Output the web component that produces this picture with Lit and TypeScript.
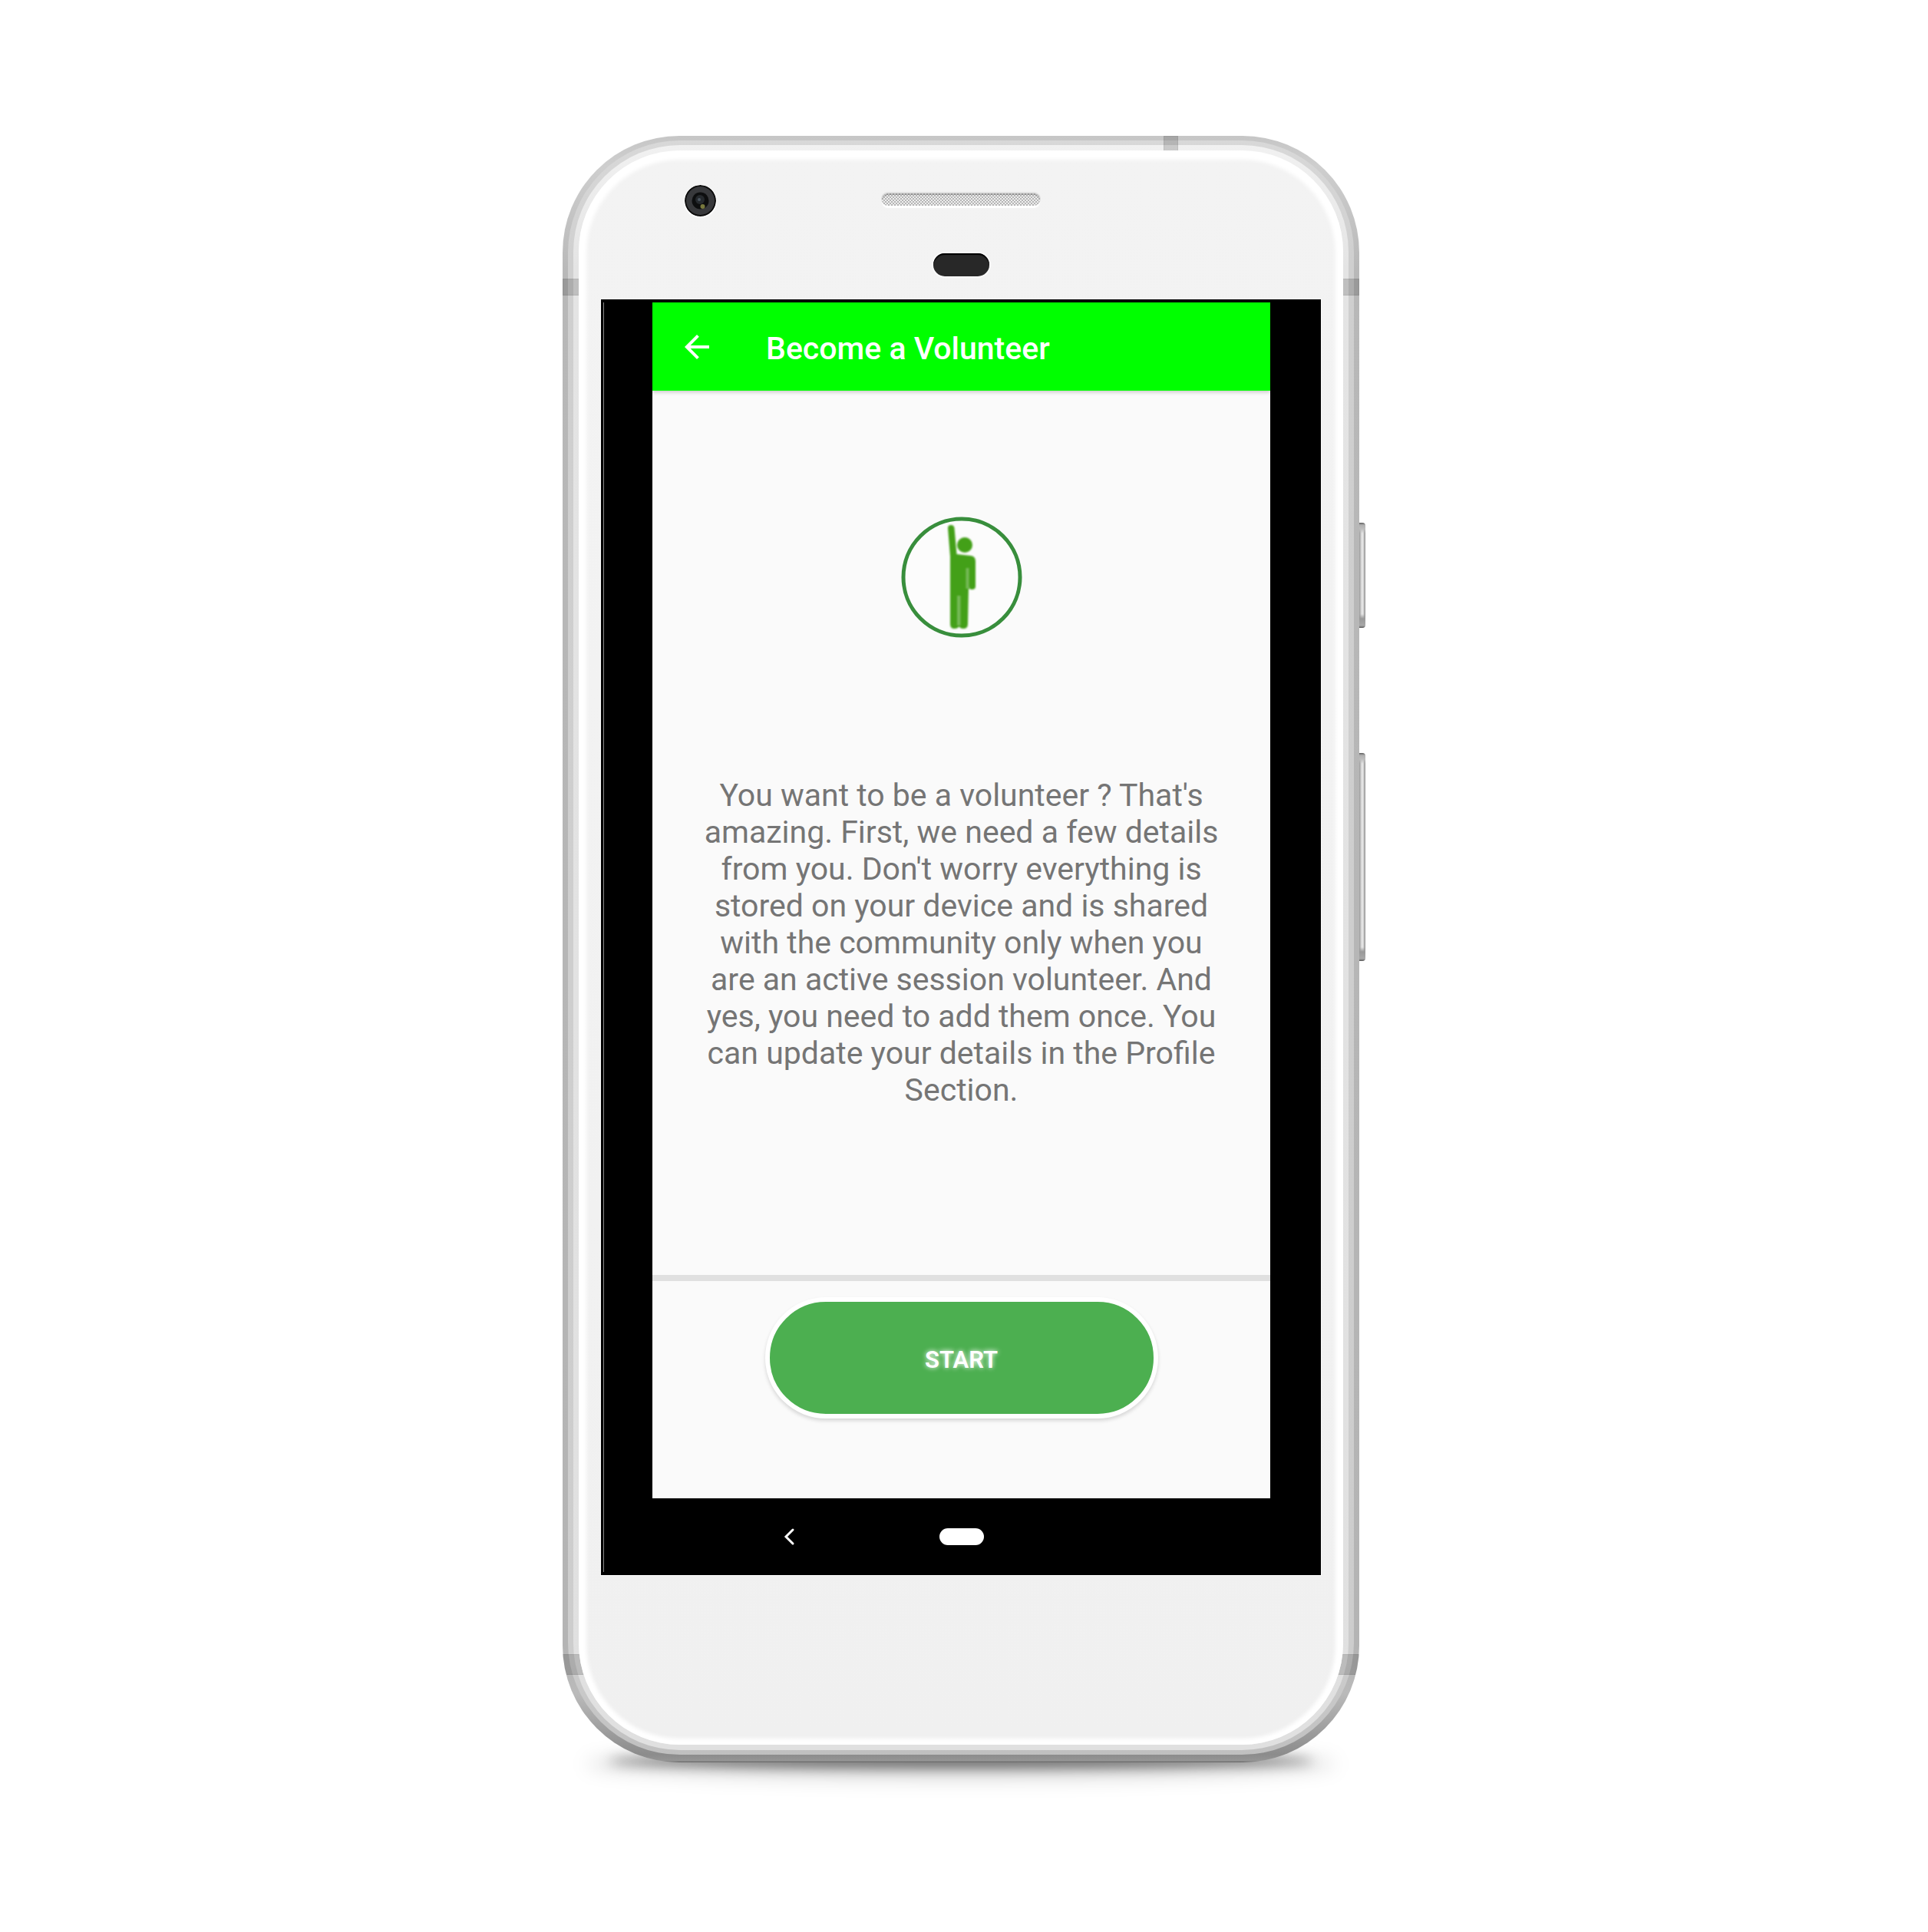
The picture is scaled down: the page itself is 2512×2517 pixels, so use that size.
import { LitElement, html, css, svg } from "lit";
import { customElement, property } from "lit/decorators.js";

const arrowIcon = svg`<path d="M20 11H7.83l5.59-5.59L12 4l-8 8 8 8 1.41-1.41L7.83 13H20v-2z" fill="currentColor" />`;

/* Round badge with a person raising one arm. */
@customElement("volunteer-badge")
export class VolunteerBadge extends LitElement {
  static styles = css`
    :host {
      display: block;
    }
    .badge {
      display: block;
      width: 158px;
      height: 158px;
    }
    .ring {
      fill: #fcfcfc;
      stroke: #388e3c;
      stroke-width: 5;
    }
    .figure {
      fill: #43a018;
      filter: blur(1px);
    }
    .seam {
      fill: #76b957;
      filter: blur(1px);
    }
  `;

  render() {
    return html`
      <svg class="badge" viewBox="0 0 158 158" role="img" aria-label="Volunteer">
        <circle class="ring" cx="79" cy="79" r="76" />
        <g class="figure">
          <circle cx="83" cy="37" r="10" />
          <path
            d="M61 15 Q61 11 65 11 Q69 11 69.500 15 L72.500 49 L91 51 Q97 52 97 58 L97 91 Q97 95 92.500 95 Q88 95 88 91 L87 140 Q87 146 81 146 Q77 146 75.500 143 Q74 146 69.500 146 Q64 146 64 140 L64 52 Z"
          />
        </g>
        <g class="seam">
          <rect x="84.500" y="67" width="4" height="27" />
          <rect x="73" y="103" width="4.500" height="39" />
        </g>
      </svg>
    `;
  }
}

/* Handset shell; the slotted content is the display. */
@customElement("phone-frame")
export class PhoneFrame extends LitElement {
  static styles = css`
    :host {
      display: block;
      width: 100%;
      max-width: 1046px;
    }
    .device {
      display: flex;
      align-items: stretch;
      position: relative;
    }
    .ground {
      position: absolute;
      left: 60px;
      right: 68px;
      bottom: -8px;
      height: 20px;
      border-radius: 50%;
      background: rgba(0, 0, 0, 0.5);
      filter: blur(8px);
    }
    .ground-wide {
      left: 30px;
      right: 38px;
      bottom: -22px;
      height: 40px;
      background: rgba(0, 0, 0, 0.14);
      filter: blur(12px);
    }
    .shell {
      position: relative;
      flex: 1;
      min-width: 0;
      overflow: hidden;
      border-radius: 152px;
      padding: 6px 7px 10px;
      background: linear-gradient(
        180deg,
        #c6c6c6 0,
        #cecece 40px,
        #b8b8b8 180px,
        #b4b4b4 calc(100% - 150px),
        #bababa calc(100% - 90px),
        #8c8c8c calc(100% - 10px),
        #959595 calc(100% - 2px),
        #606060 100%
      );
    }
    .ring-mid {
      border-radius: 146px;
      padding: 6px 7px;
      background: linear-gradient(180deg, #d8d8d8 0, #cfcfcf 160px, #cdcdcd calc(100% - 120px), #c0c0c0 100%);
    }
    .ring-in {
      border-radius: 139px;
      padding: 7px;
      background: linear-gradient(180deg, #f1f1f1 0, #e4e4e4 160px, #e0e0e0 100%);
    }
    .face {
      position: relative;
      z-index: 1;
      border-radius: 132px;
      padding-bottom: 221px;
      background: linear-gradient(180deg, #f3f3f3, #f0f0f0);
      box-shadow: inset 0 2px 5px 10px #ffffff;
    }
    .antenna {
      position: absolute;
      background: rgba(0, 0, 0, 0.16);
      box-shadow: inset 0 0 1px 1px rgba(0, 0, 0, 0.06);
    }
    .antenna-upper {
      left: 0;
      right: 0;
      top: 186px;
      height: 22px;
    }
    .antenna-lower {
      left: 0;
      right: 0;
      bottom: 114px;
      height: 27px;
    }
    .antenna-top {
      top: 0;
      right: 236px;
      width: 19px;
      height: 24px;
    }
    .bezel {
      display: grid;
      justify-items: center;
      row-gap: 48px;
      padding: 45px 138px 30px;
    }
    .sensors {
      display: grid;
      grid-template-columns: 1fr auto 1fr;
      align-items: center;
      justify-self: stretch;
    }
    .camera {
      display: block;
      width: 41px;
      height: 41px;
      border-radius: 50%;
      box-shadow: 0 1px 1px 1px #ffffff;
    }
    .speaker {
      width: 206px;
      height: 16px;
      margin-bottom: 4px;
      border-radius: 8px;
      background: repeating-conic-gradient(#b4b4b4 0 25%, #eeeeee 0 50%) 0 0 / 4px 4px;
      box-shadow: inset 0 2px 1px rgba(0, 0, 0, 0.22), 0 -1px 0 1px #e0e0e0, 0 3px 1px #ffffff;
    }
    .proximity {
      width: 73px;
      height: 30px;
      border-radius: 15px;
      background: #282828;
      box-shadow: inset 0 2px 1px #000000, 0 0 1px 2px #fafafa;
    }
    .display {
      padding: 0 29px;
    }
    .keys {
      display: flex;
      flex-direction: column;
      flex: none;
      width: 8px;
      padding-top: 504px;
      gap: 163px;
    }
    .key {
      height: 137px;
      border-radius: 0 4px 4px 0;
      background: linear-gradient(180deg, #5a5a5a 0, #b0b0b0 3px, #bdbdbd 8px, transparent 14px calc(100% - 18px), #999999 calc(100% - 12px), #a8a8a8 calc(100% - 3px), #555555 100%),
        linear-gradient(90deg, #989898, #e4e4e4 40%, #e4e4e4 60%, #8c8c8c);
    }
    .key-long {
      height: 271px;
    }
  `;

  render() {
    return html`
      <div class="device">
        <div class="ground ground-wide"></div>
        <div class="ground"></div>
        <div class="shell">
          <div class="ring-mid">
            <div class="ring-in">
              <div class="face">
                <div class="bezel">
                  <div class="sensors">
                    <svg class="camera" viewBox="0 0 41 41" aria-hidden="true">
                      <circle cx="20.500" cy="20.500" r="20.500" fill="#0c0c0c" />
                      <circle cx="20.500" cy="20.500" r="18.500" fill="#38393c" />
                      <circle cx="20.500" cy="20.500" r="11" fill="#0d0e0f" />
                      <circle cx="20" cy="19" r="6" fill="#25292d" />
                      <circle cx="19" cy="19" r="2" fill="#4b555f" />
                      <circle cx="23.500" cy="28" r="3" fill="#77783d" />
                    </svg>
                    <div class="speaker"></div>
                  </div>
                  <div class="proximity"></div>
                </div>
                <div class="display"><slot></slot></div>
              </div>
            </div>
          </div>
          <div class="antenna antenna-upper"></div>
          <div class="antenna antenna-lower"></div>
          <div class="antenna antenna-top"></div>
        </div>
        <div class="keys">
          <div class="key"></div>
          <div class="key key-long"></div>
        </div>
      </div>
    `;
  }
}

@customElement("volunteer-screen")
export class VolunteerScreen extends LitElement {
  @property() heading = "";
  @property() message = "";

  static styles = css`
    :host {
      display: block;
      font-family: Roboto, "Liberation Sans", sans-serif;
    }
    .screen {
      background: #000000;
      padding: 4px 66px 0 67px;
      box-shadow: 0 0 0 1px #fafafa;
      position: relative;
    }
    .glint {
      position: absolute;
      left: 3px;
      top: 4px;
      bottom: 4px;
      width: 1px;
      background: #8a8a8a;
    }
    .app {
      display: flex;
      flex-direction: column;
      background: #fafafa;
    }
    .toolbar {
      display: flex;
      align-items: center;
      gap: 66px;
      height: 115px;
      padding: 0 34px;
      background: #00ff00;
      color: #ffffff;
      box-shadow: 0 2px 5px rgba(0, 0, 0, 0.2);
    }
    .back,
    .nav-back,
    .nav-home {
      border: 0;
      padding: 0;
      background: none;
      color: #ffffff;
      cursor: pointer;
    }
    .back svg,
    .nav-back svg {
      display: block;
    }
    .title {
      margin: 0;
      padding-top: 4px;
      font-size: 41px;
      line-height: 48px;
      font-weight: 500;
    }
    .content {
      display: flex;
      flex-direction: column;
      align-items: center;
      gap: 181px;
      padding: 164px 64px 217px;
    }
    .message {
      margin: 0;
      font-size: 41px;
      line-height: 48px;
      color: #757575;
      text-align: center;
    }
    .actions {
      display: flex;
      justify-content: center;
      border-top: 8px solid #e0e0e0;
      padding: 21px 0 104px;
    }
    .start {
      width: 512px;
      height: 158px;
      border: 6px solid #ffffff;
      border-radius: 79px;
      padding: 4px 0 0;
      background: #4caf50;
      color: #ffffff;
      font-family: inherit;
      font-size: 31px;
      font-weight: 600;
      text-shadow: 0 0 6px #ffffff;
      box-shadow: 0 3px 5px rgba(0, 0, 0, 0.14);
      cursor: pointer;
    }
    .navbar {
      display: grid;
      grid-template-columns: 1fr auto 1fr;
      align-items: center;
      height: 100px;
    }
    .nav-back {
      justify-self: center;
      padding-right: 18px;
    }
    .nav-home {
      width: 58px;
      height: 22px;
      border-radius: 11px;
      background: #ffffff;
    }
  `;

  render() {
    return html`
      <div class="screen">
        <div class="glint"></div>
        <main class="app">
          <header class="toolbar">
            <button class="back" aria-label="Back">
              <svg width="48" height="48" viewBox="0 0 24 24">${arrowIcon}</svg>
            </button>
            <h1 class="title">${this.heading}</h1>
          </header>
          <section class="content">
            <volunteer-badge></volunteer-badge>
            <p class="message">${this.message}</p>
          </section>
          <footer class="actions">
            <button class="start">START</button>
          </footer>
        </main>
        <nav class="navbar">
          <button class="nav-back" aria-label="System back">
            <svg width="24" height="24" viewBox="0 0 24 24">
              <path d="M17 3 L8 12 L17 21" fill="none" stroke="currentColor" stroke-width="3" stroke-linecap="round" />
            </svg>
          </button>
          <button class="nav-home" aria-label="Home"></button>
        </nav>
      </div>
    `;
  }
}

@customElement("app-root")
export class AppRoot extends LitElement {
  static styles = css`
    :host {
      display: block;
    }
    .page {
      display: flex;
      justify-content: center;
      align-items: flex-start;
      box-sizing: border-box;
      min-height: 100vh;
      padding: 177px 24px;
      background: #ffffff;
    }
  `;

  render() {
    return html`
      <div class="page">
        <phone-frame>
          <volunteer-screen
            heading="Become a Volunteer"
            message="You want to be a volunteer ? That's amazing. First, we need a few details from you. Don't worry everything is stored on your device and is shared with the community only when you are an active session volunteer. And yes, you need to add them once. You can update your details in the Profile Section."
          ></volunteer-screen>
        </phone-frame>
      </div>
    `;
  }
}
